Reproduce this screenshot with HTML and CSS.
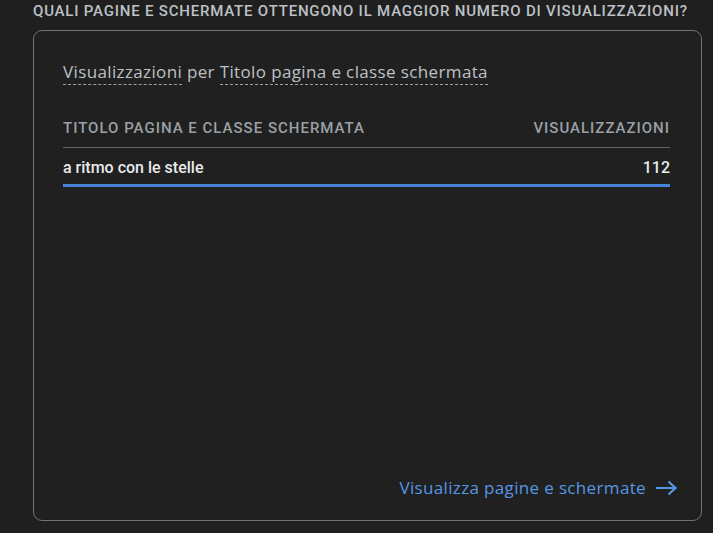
FILE: index.html
```html
<!DOCTYPE html>
<html lang="it">
<head>
<meta charset="utf-8">
<link rel="stylesheet" href="styles.css">
</head>
<body>
<div class="page">
  <h2 class="question">QUALI PAGINE E SCHERMATE OTTENGONO IL MAGGIOR NUMERO DI VISUALIZZAZIONI?</h2>
  <div class="card">
    <div class="subtitle"><span class="dash">Visualizzazioni</span> per <span class="dash">Titolo pagina e classe schermata</span></div>
    <div class="table">
      <div class="thead">
        <span>TITOLO PAGINA E CLASSE SCHERMATA</span>
        <span>VISUALIZZAZIONI</span>
      </div>
      <div class="row">
        <span>a ritmo con le stelle</span>
        <span>112</span>
      </div>
      <div class="bar"><div class="fill" style="width:100%"></div></div>
    </div>
    <div class="footer">
      <a class="link" href="#">Visualizza pagine e schermate
        <svg class="arrow" width="23" height="16" viewBox="0 0 23 16"><path d="M1 8H20.5M13.5 1.5L20.5 8L13.5 14.5" fill="none" stroke="currentColor" stroke-width="2.2"/></svg>
      </a>
    </div>
  </div>
</div>
</body>
</html>
```
FILE: styles.css
```css
html, body { margin: 0; padding: 0; }
body {
  background: #1f1f1f;
  font-family: Roboto, "Liberation Sans", sans-serif;
  color: #e8eaed;
  width: 713px;
  height: 533px;
  overflow: hidden;
}
.page {
  padding: 3px 11px 0 33px;
}
.question {
  margin: 0;
  font-size: 15px;
  font-weight: 500;
  letter-spacing: 0.8px;
  color: #bdc1c6;
  line-height: 17px;
  white-space: nowrap;
}
.card {
  margin-top: 10px;
  border: 1px solid #707275;
  border-radius: 9px;
  box-sizing: border-box;
  height: 491px;
  padding: 29px 31px 0 29px;
  display: flex;
  flex-direction: column;
  background: #202020;
}
.subtitle {
  font-family: "Open Sans", Roboto, sans-serif;
  font-size: 17px;
  color: #bdc1c6;
  line-height: 24px;
  letter-spacing: 0.37px;
}
.dash {
  border-bottom: 1px dashed #9aa0a6;
  padding-bottom: 1px;
}
.table {
  margin-top: 35px;
}
.thead {
  display: flex;
  justify-content: space-between;
  font-size: 15px;
  font-weight: 500;
  letter-spacing: 1px;
  color: #9aa0a6;
  line-height: 18px;
  padding-bottom: 10px;
  border-bottom: 1px solid #5f6368;
}
.row {
  display: flex;
  justify-content: space-between;
  font-size: 16px;
  font-weight: 500;
  color: #e8eaed;
  line-height: 20px;
  padding-top: 10px;
  padding-bottom: 6px;
}
.bar { height: 3px; }
.fill { height: 3px; background: #4583d8; }
.footer {
  margin-top: auto;
  padding-bottom: 20px;
  display: flex;
  justify-content: flex-end;
}
.link {
  font-family: "Open Sans", Roboto, sans-serif;
  font-size: 17px;
  letter-spacing: 0.35px;
  color: #5697e4;
  text-decoration: none;
  display: flex;
  align-items: center;
  gap: 9px;
  margin-right: -8px;
  line-height: 24px;
}
.arrow { display: block; }
```
